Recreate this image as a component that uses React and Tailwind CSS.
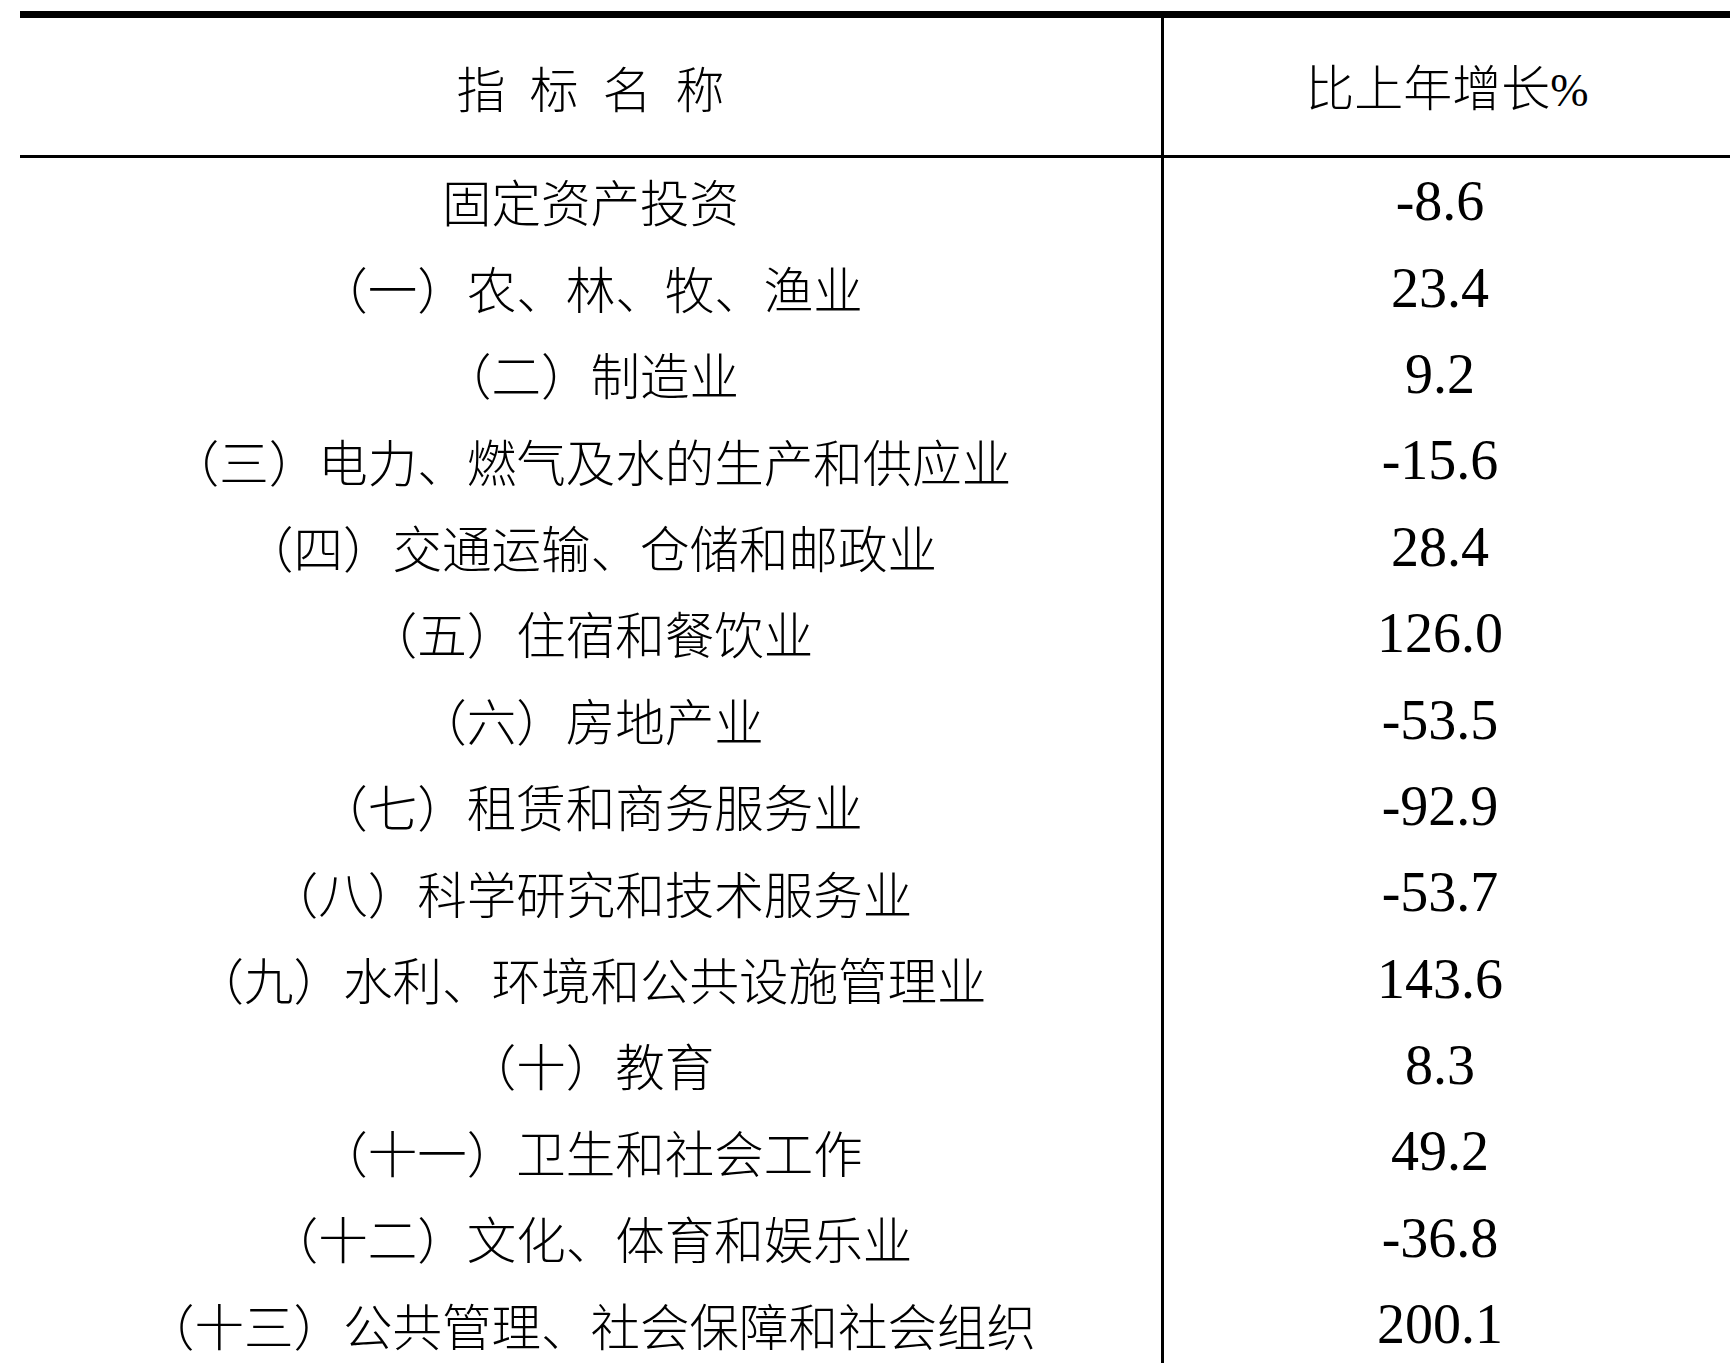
import React from "react";

const rows = [
  ["固定资产投资", "-8.6"],
  ["（一）农、林、牧、渔业", "23.4"],
  ["（二）制造业", "9.2"],
  ["（三）电力、燃气及水的生产和供应业", "-15.6"],
  ["（四）交通运输、仓储和邮政业", "28.4"],
  ["（五）住宿和餐饮业", "126.0"],
  ["（六）房地产业", "-53.5"],
  ["（七）租赁和商务服务业", "-92.9"],
  ["（八）科学研究和技术服务业", "-53.7"],
  ["（九）水利、环境和公共设施管理业", "143.6"],
  ["（十）教育", "8.3"],
  ["（十一）卫生和社会工作", "49.2"],
  ["（十二）文化、体育和娱乐业", "-36.8"],
  ["（十三）公共管理、社会保障和社会组织", "200.1"],
];

const cjk = "font-['Noto_Sans_CJK_SC',sans-serif] font-light";
const num = "font-['Liberation_Serif',serif]";

export default function App() {
  return (
    <div className="w-[1736px] h-[1363px] overflow-hidden bg-white text-black pt-[11px] pl-[20px]">
      <div className="w-[1710px] border-t-[7px] border-black">
        {/* header */}
        <div className="grid grid-cols-[1144px_566px] h-[140px] border-b-[3px] border-black">
          <div className="border-r-[3px] border-black flex items-center justify-center">
            <span className={`${cjk} text-[49px] leading-none tracking-[24px] pl-[24px]`}>
              指标名称
            </span>
          </div>
          <div className="flex items-center justify-center">
            <span className={`${cjk} text-[49px] leading-none`}>
              比上年增长<span className={`${num} text-[46px]`}>%</span>
            </span>
          </div>
        </div>

        {/* body */}
        {rows.map(([name, value]) => (
          <div key={name} className="grid grid-cols-[1144px_566px] h-[86.4px]">
            <div className="border-r-[3px] border-black flex items-center justify-center">
              <span className={`${cjk} text-[49.5px] leading-none whitespace-nowrap`}>{name}</span>
            </div>
            <div className="flex items-center justify-center pr-[14px]">
              <span className={`${num} text-[56px] leading-none`}>{value}</span>
            </div>
          </div>
        ))}
      </div>
    </div>
  );
}
